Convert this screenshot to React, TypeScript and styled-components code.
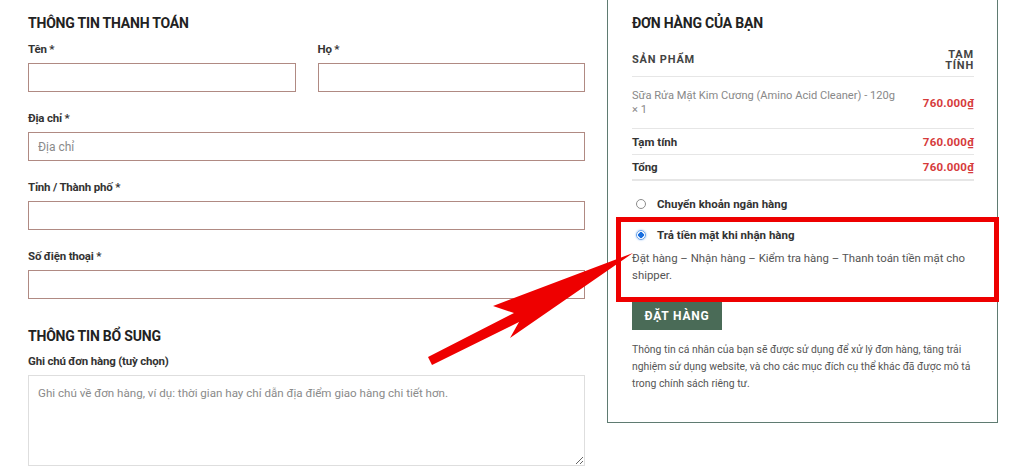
import * as React from 'react';
import styled, { createGlobalStyle } from 'styled-components';

const GlobalStyle = createGlobalStyle`
  html, body {
    margin: 0;
    padding: 0;
    background: #ffffff;
  }
  body {
    font-family: Roboto, "Liberation Sans", Arial, sans-serif;
    color: #333333;
  }
  * {
    box-sizing: border-box;
  }
`;

const Page = styled.div`
  position: relative;
  width: 1024px;
  height: 470px;
  overflow: hidden;
  display: flex;
  align-items: flex-start;
  gap: 22px;
  padding-left: 28px;
`;

const Billing = styled.div`
  width: 557px;
  display: flex;
  flex-direction: column;
  padding-top: 15px;
`;

const SectionTitle = styled.h3<{ $space?: number }>`
  margin: ${p => p.$space ?? 0}px 0 0;
  font-size: 14px;
  line-height: 17px;
  font-weight: 700;
  color: #222222;
  text-transform: uppercase;
  letter-spacing: -0.2px;
`;

const FieldRow = styled.div`
  display: flex;
  gap: 22px;
`;

const Field = styled.div<{ $top: number; $half?: boolean }>`
  flex: ${p => (p.$half ? '1 1 0' : 'none')};
  display: flex;
  flex-direction: column;
  margin-top: ${p => p.$top}px;
`;

const Label = styled.label`
  font-size: 11.5px;
  line-height: 14px;
  font-weight: 700;
  color: #333333;
  letter-spacing: -0.2px;
  margin-bottom: 7px;
`;

const Input = styled.input`
  height: 29px;
  width: 100%;
  border: 1px solid #b08a83;
  padding: 0 9px;
  font-family: Roboto, "Liberation Sans", Arial, sans-serif;
  font-size: 12px;
  color: #333;
  outline: none;
  &::placeholder {
    color: #8a8a8a;
  }
`;

const TextArea = styled.textarea`
  height: 91px;
  width: 100%;
  border: 1px solid #dedede;
  padding: 9px 9px;
  font-family: Roboto, "Liberation Sans", Arial, sans-serif;
  font-size: 11.6px;
  line-height: 17px;
  color: #333;
  resize: vertical;
  outline: none;
  &::placeholder {
    color: #8a8a8a;
  }
`;

const OrderPanel = styled.aside`
  position: relative;
  width: 391px;
  height: 423px;
  border: 1px solid #5f7b71;
  border-top: none;
  padding: 15px 23px 0 24px;
  display: flex;
  flex-direction: column;
`;

const OrderTable = styled.div`
  display: flex;
  flex-direction: column;
  margin-top: 12px;
`;

const TableRow = styled.div<{ $height: number; $strong?: boolean }>`
  display: flex;
  align-items: center;
  justify-content: space-between;
  height: ${p => p.$height}px;
  border-bottom: ${p => (p.$strong ? 2 : 1)}px solid #e6e6e6;
`;

const HeadCell = styled.div<{ $right?: boolean }>`
  font-size: 11px;
  line-height: 11.5px;
  font-weight: 700;
  color: #444444;
  letter-spacing: 0.8px;
  text-transform: uppercase;
  text-align: ${p => (p.$right ? 'right' : 'left')};
`;

const ProductName = styled.div`
  width: 270px;
  font-size: 11.1px;
  line-height: 14px;
  color: #888888;
`;

const RowLabel = styled.div`
  font-size: 11.5px;
  font-weight: 700;
  color: #333333;
`;

const Price = styled.div`
  font-size: 11.5px;
  font-weight: 700;
  color: #d63b3b;
  letter-spacing: 0.2px;
`;

const PaymentMethods = styled.div`
  display: flex;
  flex-direction: column;
  margin-top: 16px;
`;

const Method = styled.label<{ $gap: number }>`
  display: flex;
  align-items: center;
  gap: 11px;
  margin-top: ${p => p.$gap}px;
  padding-left: 4px;
  font-size: 11.5px;
  line-height: 14px;
  font-weight: 700;
  color: #333333;
`;

const Radio = styled.span<{ $checked?: boolean }>`
  width: 10px;
  height: 10px;
  border-radius: 50%;
  border: 1px solid ${p => (p.$checked ? '#6aa2e8' : '#8c8c8c')};
  background: ${p => (p.$checked ? 'radial-gradient(circle, #1a6fe0 0 2.6px, #ffffff 3px)' : '#ffffff')};
  box-shadow: ${p => (p.$checked ? '0 0 2px #7fb0f0' : 'none')};
  flex-shrink: 0;
`;

const MethodNote = styled.p`
  margin: 8px 0 0;
  font-size: 11.4px;
  line-height: 17px;
  color: #555555;
`;

const PlaceOrder = styled.button`
  align-self: flex-start;
  margin-top: 18px;
  width: 90px;
  height: 28px;
  border: none;
  background: #4a6b57;
  color: #ffffff;
  font-family: Roboto, "Liberation Sans", Arial, sans-serif;
  font-size: 12px;
  font-weight: 700;
  letter-spacing: 0.8px;
  cursor: pointer;
`;

const Privacy = styled.p`
  margin: 11px 0 0;
  font-size: 10.4px;
  line-height: 17px;
  color: #555555;
`;

/* annotation drawn over the screenshot */
const Highlight = styled.div`
  position: absolute;
  left: 8px;
  right: -2px;
  top: 217px;
  height: 85px;
  border: 5px solid #ee0000;
  pointer-events: none;
`;

const ArrowLayer = styled.svg`
  position: absolute;
  left: 0;
  top: 0;
  pointer-events: none;
`;

export default function App() {
  return (
    <>
      <GlobalStyle />
      <Page>
        <Billing>
          <SectionTitle>Thông tin thanh toán</SectionTitle>
          <FieldRow>
            <Field $top={10} $half>
              <Label>Tên *</Label>
              <Input />
            </Field>
            <Field $top={10} $half>
              <Label>Họ *</Label>
              <Input />
            </Field>
          </FieldRow>
          <Field $top={19}>
            <Label>Địa chỉ *</Label>
            <Input placeholder="Địa chỉ" />
          </Field>
          <Field $top={19}>
            <Label>Tỉnh / Thành phố *</Label>
            <Input />
          </Field>
          <Field $top={19}>
            <Label>Số điện thoại *</Label>
            <Input />
          </Field>
          <SectionTitle $space={29}>Thông tin bổ sung</SectionTitle>
          <Field $top={9}>
            <Label>Ghi chú đơn hàng (tuỳ chọn)</Label>
            <TextArea placeholder="Ghi chú về đơn hàng, ví dụ: thời gian hay chỉ dẫn địa điểm giao hàng chi tiết hơn." />
          </Field>
        </Billing>

        <OrderPanel>
          <SectionTitle>Đơn hàng của bạn</SectionTitle>
          <OrderTable>
            <TableRow $height={33}>
              <HeadCell>Sản phẩm</HeadCell>
              <HeadCell $right>Tạm<br />tính</HeadCell>
            </TableRow>
            <TableRow $height={52}>
              <ProductName>Sữa Rửa Mặt Kim Cương (Amino Acid Cleaner) - 120g {'×\u00a01'}</ProductName>
              <Price>760.000₫</Price>
            </TableRow>
            <TableRow $height={26}>
              <RowLabel>Tạm tính</RowLabel>
              <Price>760.000₫</Price>
            </TableRow>
            <TableRow $height={26} $strong>
              <RowLabel>Tổng</RowLabel>
              <Price>760.000₫</Price>
            </TableRow>
          </OrderTable>
          <PaymentMethods>
            <Method $gap={0}>
              <Radio />
              Chuyển khoản ngân hàng
            </Method>
            <Method $gap={17}>
              <Radio $checked />
              Trả tiền mặt khi nhận hàng
            </Method>
            <MethodNote>Đặt hàng – Nhận hàng – Kiểm tra hàng – Thanh toán tiền mặt cho shipper.</MethodNote>
          </PaymentMethods>
          <PlaceOrder>ĐẶT HÀNG</PlaceOrder>
          <Privacy>
            Thông tin cá nhân của bạn sẽ được sử dụng để xử lý đơn hàng, tăng trải nghiệm sử dụng website, và cho các mục đích cụ thể khác đã được mô tả trong chính sách riêng tư.
          </Privacy>
          <Highlight />
        </OrderPanel>

        <ArrowLayer width="1024" height="470" viewBox="0 0 1024 470">
          <polygon
            fill="#ee0000"
            points="633,253 493,306 514,313 428,357 432,365 519,322 510,338"
          />
        </ArrowLayer>
      </Page>
    </>
  );
}
